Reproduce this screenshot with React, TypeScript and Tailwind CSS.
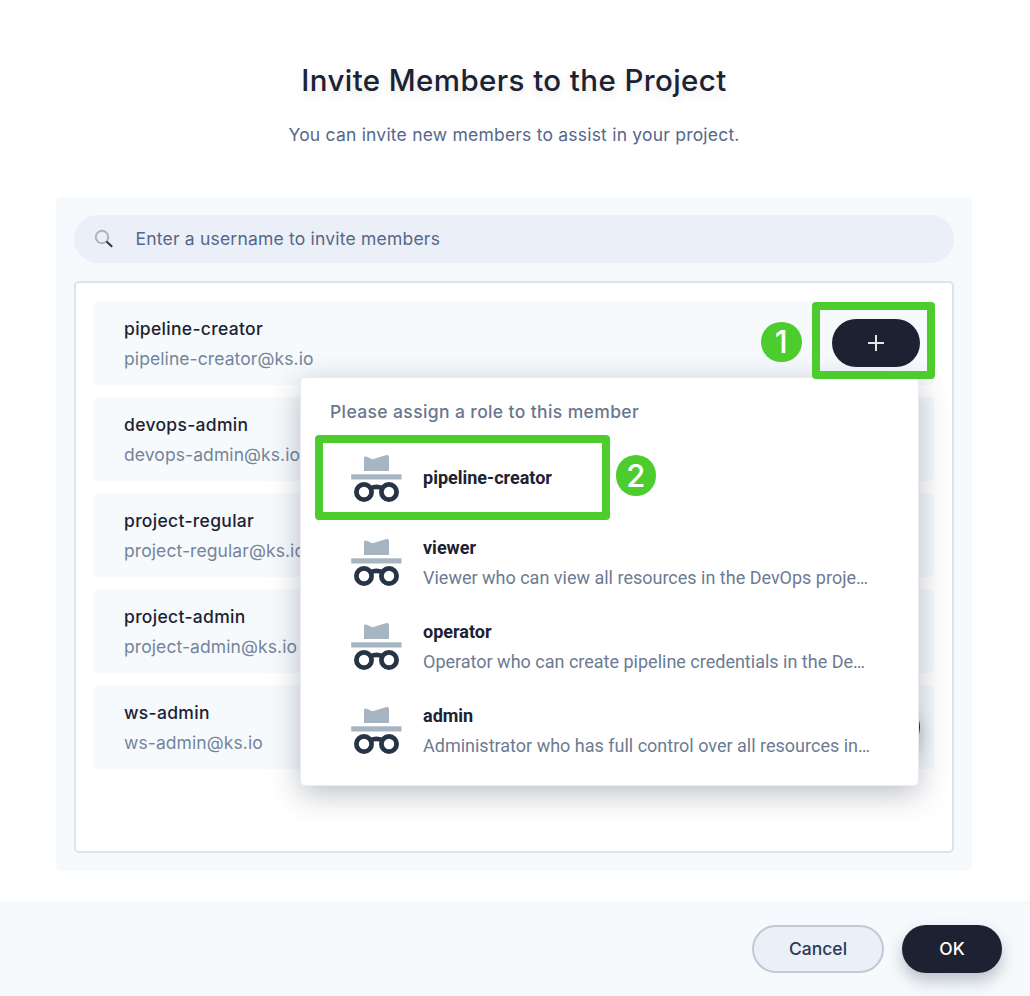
const members = [
  { name: 'pipeline-creator', button: 'flat' },
  { name: 'devops-admin', button: 'none' },
  { name: 'project-regular', button: 'none' },
  { name: 'project-admin', button: 'none' },
  { name: 'ws-admin', button: 'raised' },
];

const roles = [
  { name: 'pipeline-creator', desc: '' },
  { name: 'viewer', desc: 'Viewer who can view all resources in the DevOps proje…' },
  { name: 'operator', desc: 'Operator who can create pipeline credentials in the De…' },
  { name: 'admin', desc: 'Administrator who has full control over all resources in…' },
];

function RoleIcon() {
  return (
    <svg width="52" height="50" viewBox="0 0 52 50" className="mt-0.5 shrink-0" fill="none">
      <path d="M14 17V4q0-2 2-1.5L22.5 5.2 36.5 1.1Q39 .7 39 3V17Z" fill="#a7b5c3" />
      <rect x="1.2" y="20.3" width="50.3" height="5.2" fill="#a7b5c3" />
      <circle cx="14" cy="38" r="7.6" stroke="#263446" strokeWidth="4.8" />
      <circle cx="39" cy="38" r="7.6" stroke="#263446" strokeWidth="4.8" />
      <path d="M20.5 34.4q6-3 12 0" stroke="#263446" strokeWidth="4.6" />
    </svg>
  );
}

function AddButton({ raised }: { raised: boolean }) {
  return (
    <button
      className={`flex h-12 w-[88px] items-center justify-center rounded-full bg-[#1c2231] ${
        raised ? 'shadow-[0_8px_16px_0_rgba(36,46,66,0.28)]' : ''
      }`}
    >
      <svg width="16" height="16" viewBox="0 0 16 16" stroke="#e4e6ea" strokeWidth="2">
        <path d="M8 0v16M0 8h16" />
      </svg>
    </button>
  );
}

function RolePopover() {
  return (
    <div className="absolute left-[300px] top-[377px] h-[409px] w-[619px] rounded-[5px] border border-[#e9ebef] bg-white pl-[29px] pt-[21px] shadow-[0_8px_30px_0_rgba(36,46,66,0.3)]">
      <p className="h-[26px] text-[17.5px] font-medium leading-[26px] tracking-[0.38px] text-[#68778e]">
        Please assign a role to this member
      </p>
      <ul className="mt-[11px] font-['Roboto',sans-serif]">
        {roles.map((role) => (
          <li key={role.name} className="flex h-[84px] items-center pl-5">
            <RoleIcon />
            <div className={`ml-[21px] whitespace-nowrap ${role.desc ? 'pt-0.5' : ''}`}>
              <p className="text-[18px] font-bold leading-[30px] text-[#1c2231]">{role.name}</p>
              {role.desc && <p className="text-[18px] leading-[30px] text-[#6c7b92]">{role.desc}</p>}
            </div>
          </li>
        ))}
      </ul>
    </div>
  );
}

export default function App() {
  return (
    <div className="relative flex h-[996px] w-[1030px] flex-col overflow-hidden bg-white font-['Inter',sans-serif]">
      <header className="flex h-[197px] flex-col items-center pr-0.5 pt-[59px]">
        <h1 className="whitespace-nowrap text-[29.5px] font-medium leading-[42px] tracking-[0.4px] text-[#1c2231] [text-shadow:0_4px_8px_rgba(36,46,66,0.12)]">
          Invite Members to the Project
        </h1>
        <p className="mt-[21px] whitespace-nowrap text-[17.5px] leading-[26px] tracking-[0.21px] text-[#55678a]">
          You can invite new members to assist in your project.
        </p>
      </header>

      <main className="ml-14 h-[674px] w-[916px] rounded-[5px] bg-[#f6fafd] p-[18px]">
        <div className="flex h-12 items-center rounded-full bg-[#ebeff7] pl-5">
          <svg width="20" height="20" viewBox="0 0 20 20" fill="none">
            <circle cx="8" cy="8" r="6.2" stroke="#a7b5c3" strokeWidth="2" />
            <path d="M12.5 12.5l5.7 5.2" stroke="#263446" strokeWidth="2" />
          </svg>
          <span className="ml-[21.5px] text-[17.5px] leading-6 tracking-[0.2px] text-[#55678a]">
            Enter a username to invite members
          </span>
        </div>

        <ul className="mt-[18px] flex h-[572px] flex-col gap-3 rounded-[5px] border-2 border-[#dce3e9] bg-white p-[18px]">
          {members.map((m) => (
            <li key={m.name} className="flex h-[84px] items-center justify-between rounded-[4px] bg-[#f6fafd] pl-[30px] pr-3.5">
              <div className="whitespace-nowrap pt-0.5 text-[17.5px] leading-[30px]">
                <p className="font-medium tracking-[0.31px] text-[#1c2231]">{m.name}</p>
                <p className="tracking-[0.09px] text-[#75849a]">{m.name}@ks.io</p>
              </div>
              {m.button !== 'none' && <AddButton raised={m.button === 'raised'} />}
            </li>
          ))}
        </ul>
      </main>

      <footer className="mt-[30px] flex h-[95px] items-start justify-end gap-[18px] bg-[#f6fafd] pr-7 pt-6">
        <button className="h-12 w-[132px] rounded-full border-2 border-[#c0c9d4] bg-[#ebeff8] text-[17.5px] font-medium text-[#2d3952]">
          Cancel
        </button>
        <button className="h-12 w-[100px] rounded-full bg-[#1c2231] text-[17.5px] font-medium text-white shadow-[0_8px_16px_0_rgba(36,46,66,0.28)]">
          OK
        </button>
      </footer>

      <RolePopover />

      <div className="absolute left-[812px] top-[302px] h-[77px] w-[123px] rounded-[4px] border-8 border-[#4ccd2d]" />
      <div className="absolute left-[761px] top-[321.5px] flex size-[40.5px] items-center justify-center rounded-full bg-[#4ccd2d] text-[31px] font-medium leading-none text-white">
        1
      </div>
      <div className="absolute left-[315px] top-[435px] h-[85px] w-[295px] rounded-[4px] border-8 border-[#4ccd2d]" />
      <div className="absolute left-[615.5px] top-[455px] flex size-[40.5px] items-center justify-center rounded-full bg-[#4ccd2d] text-[31px] font-medium leading-none text-white">
        2
      </div>
    </div>
  );
}
